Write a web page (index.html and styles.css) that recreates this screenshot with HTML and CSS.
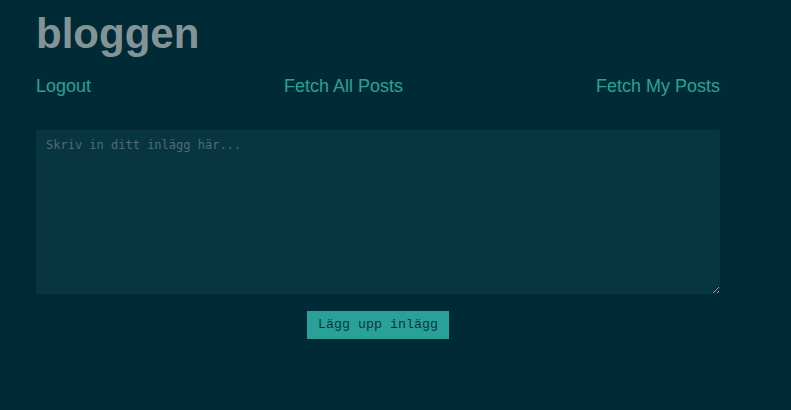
FILE: index.html
```html
<!DOCTYPE html>
<html lang="sv">
<head>
    <meta charset="UTF-8">
    <meta name="viewport" content="width=device-width, initial-scale=1.0">
    <title>bloggen</title>
    <link rel="stylesheet" href="styles.css">
</head>
<body>
    <div class="container">
        <h1 class="title">bloggen</h1>
        <nav class="nav">
            <a href="#" class="nav-link">Logout</a>
            <a href="#" class="nav-link">Fetch All Posts</a>
            <a href="#" class="nav-link">Fetch My Posts</a>
        </nav>
        <div class="post-form">
            <textarea class="post-input" placeholder="Skriv in ditt inlägg här..."></textarea>
            <button class="post-button">Lägg upp inlägg</button>
        </div>
    </div>
</body>
</html>
```

FILE: styles.css
```css
body {
    margin: 0;
    background-color: #002b36;
    font-family: "Liberation Sans", Arial, sans-serif;
}
.container {
    width: 684px;
    padding: 0 36px;
}
.title {
    margin: 10px 0 0;
    font-size: 42px;
    font-weight: bold;
    color: #839496;
}
.nav {
    display: flex;
    justify-content: space-between;
    margin-top: 18px;
}
.nav-link {
    color: #2aa198;
    font-size: 18px;
    text-decoration: none;
}
.post-form {
    display: flex;
    flex-direction: column;
    align-items: center;
    margin-top: 33px;
}
.post-input {
    box-sizing: border-box;
    width: 100%;
    height: 164px;
    padding: 8px 10px;
    border: none;
    border-radius: 3px;
    background-color: #073642;
    color: #93a1a1;
    font-family: "DejaVu Sans Mono", monospace;
    font-size: 12px;
    outline: none;
}
.post-input::placeholder {
    color: #4f6d73;
}
.post-button {
    margin-top: 17px;
    padding: 6px 11px 7px;
    border: none;
    background-color: #2aa198;
    color: #073642;
    font-family: "Liberation Mono", monospace;
    font-size: 13.33px;
    cursor: pointer;
}
```
